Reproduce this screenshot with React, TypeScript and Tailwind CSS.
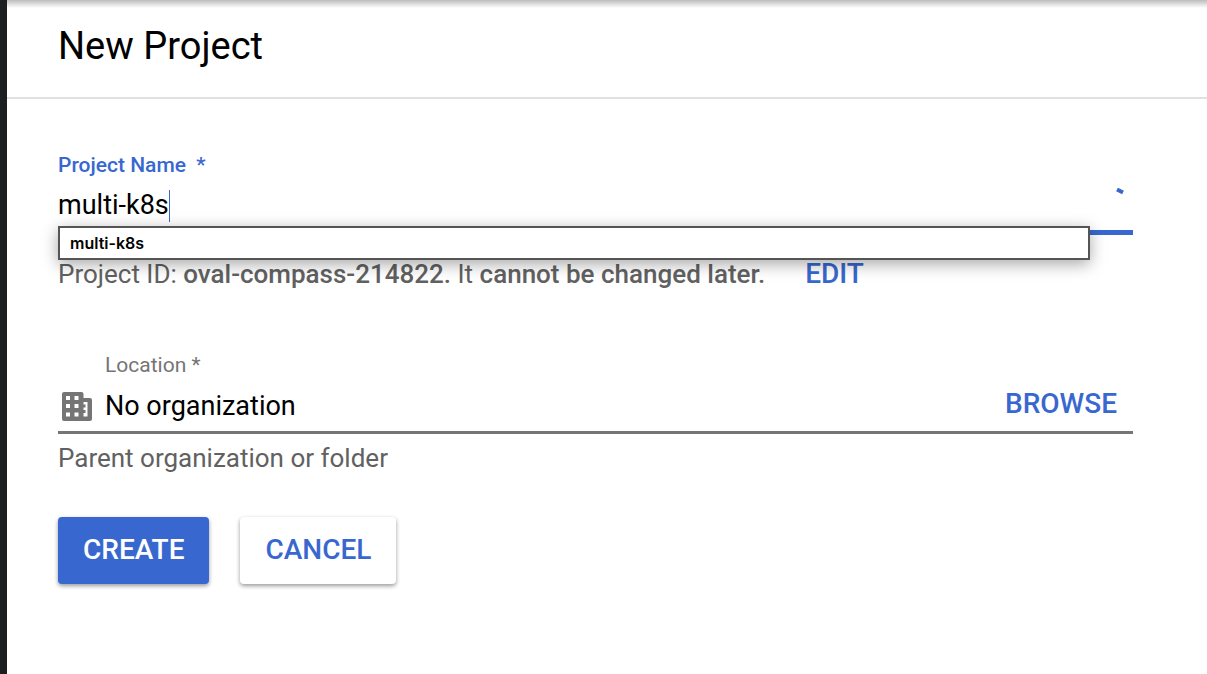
import { useState } from "react";

function BuildingIcon() {
  return (
    <svg viewBox="0 0 30 29" className="h-[29px] w-[30px] shrink-0 fill-[#757575]" aria-hidden="true">
      <path
        fillRule="evenodd"
        d="M2 0H19.500Q21.500 0 21.500 2V6H28Q30 6 30 8V27Q30 29 28 29H2Q0 29 0 27V2Q0 0 2 0ZM4 4V8H8V4ZM12.500 4V8H16.500V4ZM4 12V16H8V12ZM12.500 12V16H16.500V12ZM4 20.500V24.500H8V20.500ZM12.500 20.500V24.500H16.500V20.500ZM21.500 10V12.500H23.500V15.500H21.500V18H23.500V21H21.500V24.500H25.500V10Z"
      />
    </svg>
  );
}

export default function App() {
  const [name, setName] = useState("multi-k8s");
  return (
    <div className="relative min-h-screen overflow-hidden border-l-[7px] border-[#1d1e20] bg-white font-['Roboto',sans-serif] text-black">
      <div className="absolute inset-x-0 top-0 h-2 bg-linear-to-b from-[#bdbdbd] to-transparent" />
      <header className="border-b-2 border-[#e0e0e3] px-[51px] pt-[23px] pb-7">
        <h1 className="text-[38px] leading-[46px]">New Project</h1>
      </header>

      <form className="mr-[74px] ml-[51px] pt-[54px]" onSubmit={(e) => e.preventDefault()}>
        <div className="relative border-b-[5px] border-[#3868cf] pb-[7px]">
          <label htmlFor="name" className="block text-[21px] leading-6 font-medium text-[#3868cf]">
            Project Name&nbsp; *
          </label>
          <div className="flex h-[46px] items-center">
            <div className="relative w-full self-end">
              <input
                id="name"
                value={name}
                onChange={(e) => setName(e.target.value)}
                className="block h-9 w-full bg-transparent text-[27px] outline-none"
              />
              <span className="absolute top-[3px] left-[111px] h-8 w-px bg-[#3868cf]" />
            </div>
            <svg viewBox="0 0 24 24" className="mr-[5px] h-6 w-6 shrink-0" aria-hidden="true">
              <path d="M13 1.500L19 4.500" stroke="#3868cf" strokeWidth="4" />
            </svg>
          </div>
          <ul className="absolute top-[73px] right-[43px] left-0 border-2 border-[#555] bg-white px-[10px] font-['Inter',sans-serif] text-[16px] leading-[30px] font-semibold shadow-[0_4px_16px_rgba(0,0,0,0.35)]">
            <li>multi-k8s</li>
          </ul>
        </div>

        <div className="flex items-center gap-10 pt-[23px] text-[26px] leading-8 text-[#616161]">
          <p>
            Project ID: <span className="font-medium">oval-compass-214822.</span> It{" "}
            <span className="font-medium">cannot be changed later.</span>
          </p>
          <button type="button" className="text-[28px] leading-8 font-medium text-[#3868cf]">EDIT</button>
        </div>

        <div className="mt-[63px] border-b-[3px] border-[#757575]">
          <label htmlFor="location" className="block pl-[47px] text-[21px] leading-6 text-[#757575]">
            Location *
          </label>
          <div className="flex h-[54px] items-center pt-[4px] pr-4 pl-1">
            <BuildingIcon />
            <input
              id="location"
              readOnly
              value="No organization"
              className="ml-[13px] h-9 min-w-0 flex-1 bg-transparent text-[27px] outline-none"
            />
            <button type="button" className="pb-1 text-[28px] leading-8 font-medium text-[#3868cf]">BROWSE</button>
          </div>
        </div>
        <p className="pt-2 text-[26px] leading-8 text-[#616161]">Parent organization or folder</p>

        <div className="mt-[43px] flex gap-[31px] pb-8 text-[28px] leading-8 font-medium">
          <button type="submit" className="h-[67px] rounded-[4px] bg-[#3868cf] px-[25px] pb-px text-white shadow-[0_2px_4px_rgba(0,0,0,0.4)]">
            CREATE
          </button>
          <button type="button" className="h-[67px] rounded-[4px] bg-white px-[25px] pb-px text-[#3868cf] shadow-[0_2px_4px_rgba(0,0,0,0.4)]">
            CANCEL
          </button>
        </div>
      </form>
    </div>
  );
}
